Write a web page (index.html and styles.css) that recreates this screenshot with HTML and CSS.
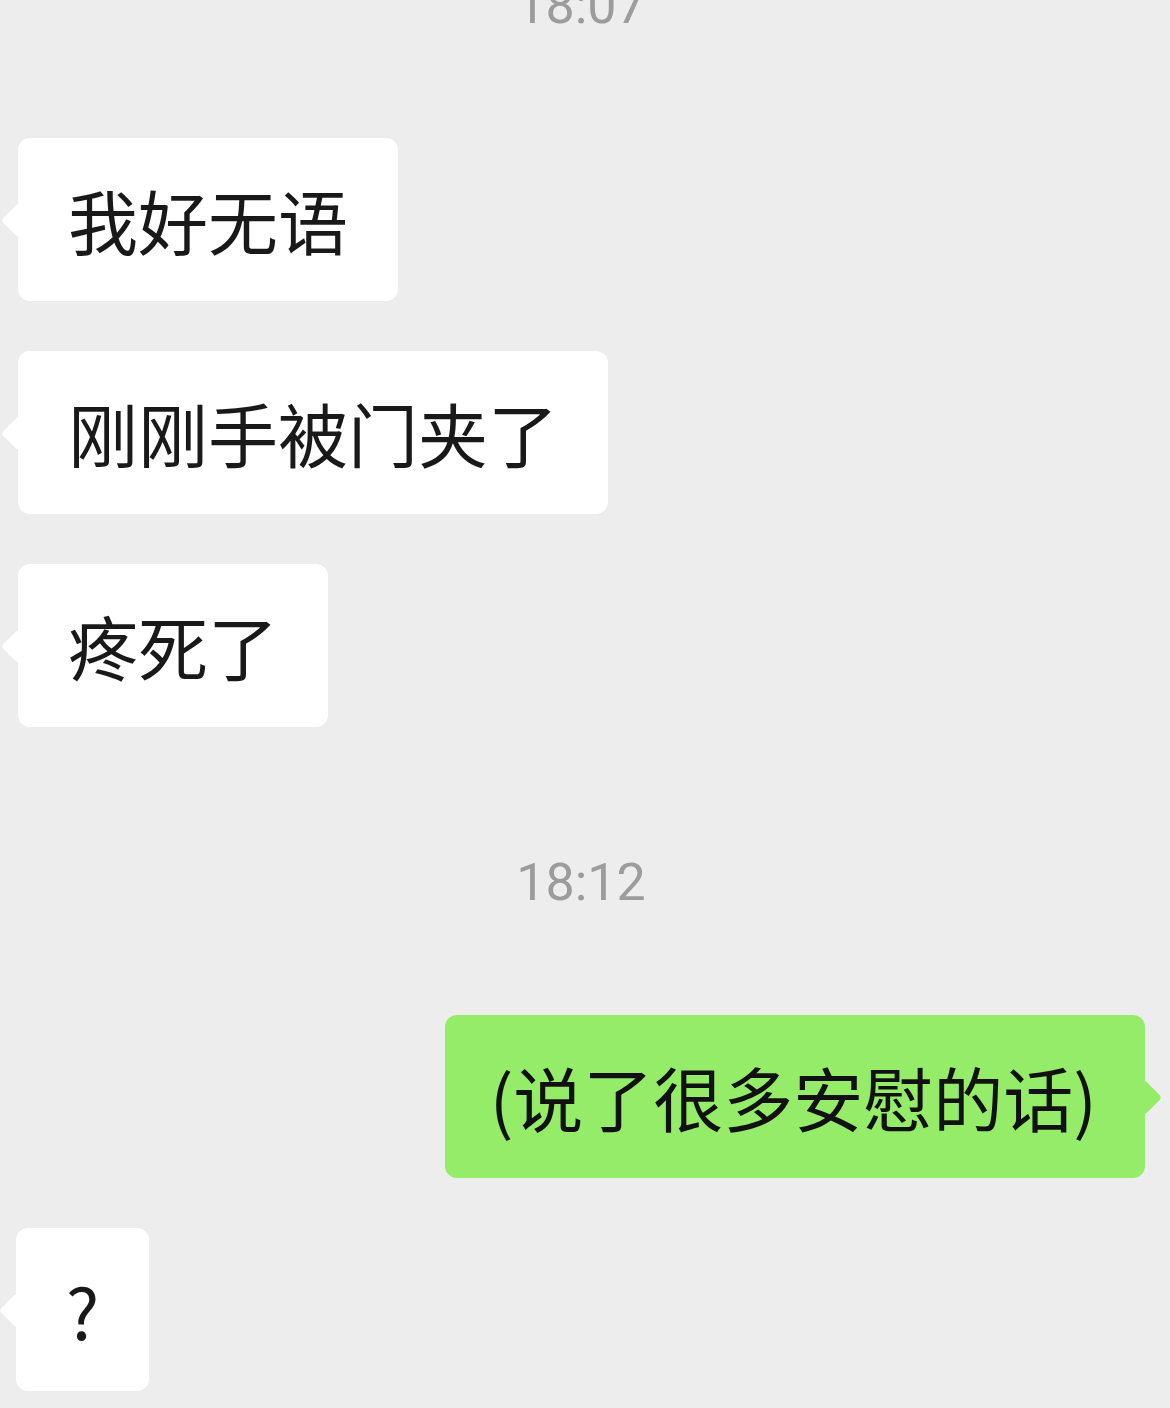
FILE: index.html
```html
<!DOCTYPE html>
<html lang="zh-CN">
<head>
    <meta charset="UTF-8">
    <title>聊天</title>
    <link rel="stylesheet" href="styles.css">
</head>
<body>
    <div class="chat">
        <div class="time time-first">18:07</div>

        <div class="msg msg-left msg-first">
            <div class="bubble">我好无语</div>
        </div>
        <div class="msg msg-left">
            <div class="bubble">刚刚手被门夹了</div>
        </div>
        <div class="msg msg-left">
            <div class="bubble">疼死了</div>
        </div>

        <div class="time">18:12</div>

        <div class="msg msg-right">
            <div class="bubble bubble-green">(说了很多安慰的话)</div>
        </div>
        <div class="msg msg-left msg-last">
            <div class="bubble">?</div>
        </div>
    </div>
</body>
</html>
```

FILE: styles.css
```css
body {
    margin: 0;
    background-color: #ededed;
    font-family: "Noto Sans CJK SC", "Noto Sans", sans-serif;
    overflow: hidden;
}

.chat {
    display: flex;
    flex-direction: column;
}

.time {
    font-family: Roboto, "Liberation Sans", sans-serif;
    font-size: 52px;
    line-height: 60px;
    color: #9c9c9c;
    text-align: center;
    margin-top: 126px;
    padding-right: 8px;
}

.time-first {
    margin-top: -24px;
}

.msg {
    display: flex;
    margin-top: 50px;
    padding: 0 25px 0 18px;
}

.msg-first {
    margin-top: 103px;
}

.msg-last {
    padding-left: 16px;
}

.time + .msg {
    margin-top: 102px;
}

.msg-left {
    justify-content: flex-start;
}

.msg-right {
    justify-content: flex-end;
}

.bubble {
    position: relative;
    background-color: #fff;
    color: #191919;
    font-size: 70px;
    line-height: 84px;
    padding: 40px 50px 39px;
    border-radius: 12px;
    white-space: nowrap;
}

/* little arrow pointing at the avatar */
.bubble::before {
    content: "";
    position: absolute;
    top: 50%;
    left: -12px;
    width: 25px;
    height: 25px;
    margin-top: -12px;
    background-color: inherit;
    border-radius: 4px;
    transform: rotate(45deg);
}

.bubble-green {
    background-color: #95ec69;
    color: #111;
    padding-left: 45px;
    padding-right: 48px;
}

.bubble-green::before {
    left: auto;
    right: -12px;
}
```
